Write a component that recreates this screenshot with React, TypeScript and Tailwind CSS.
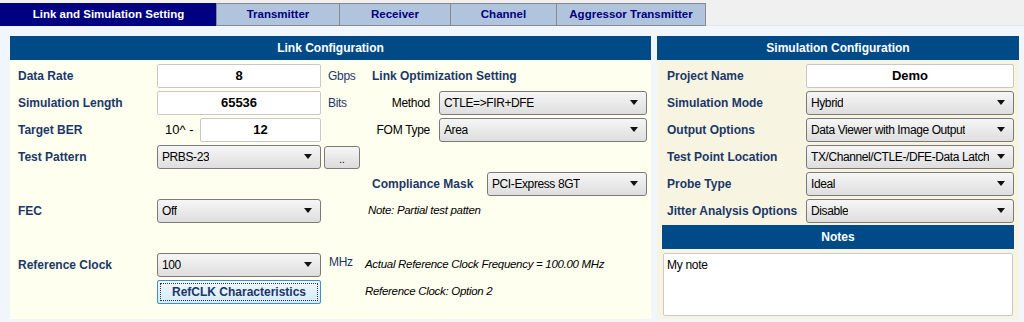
import React from "react";

const tabs = [
  { label: "Link and Simulation Setting", w: "w-[217px]", active: true },
  { label: "Transmitter", w: "w-[124px]" },
  { label: "Receiver", w: "w-[112px]" },
  { label: "Channel", w: "w-[107px]" },
  { label: "Aggressor Transmitter", w: "w-[150px]" },
];

function Arrow() {
  return (
    <svg width="8" height="5" viewBox="0 0 8 5" className="shrink-0">
      <polygon points="0,0 8,0 4,5" fill="#111" />
    </svg>
  );
}

function Select({ value, w }: { value: string; w: string }) {
  return (
    <div
      className={`${w} h-[24px] flex items-center justify-between pl-[4px] pr-[8px] border border-[#7a7a7a] rounded-[3px] bg-gradient-to-b from-[#f6f6f6] to-[#dedede] text-[12px] tracking-[-0.4px] text-black`}
    >
      <span className="whitespace-nowrap overflow-hidden">{value}</span>
      <Arrow />
    </div>
  );
}

function Input({ value, w }: { value: string; w: string }) {
  return (
    <div
      className={`${w} h-[24px] flex items-center justify-center border border-[#c9c9c9] rounded-[2px] bg-white text-[13px] font-bold text-black`}
    >
      {value}
    </div>
  );
}

function Label({ children }: { children: React.ReactNode }) {
  return (
    <div className="w-[139px] shrink-0 whitespace-nowrap text-[12px] font-bold text-[#1b3768]">{children}</div>
  );
}

function Header({ title }: { title: string }) {
  return (
    <div className="h-[24px] flex items-center justify-center bg-[#004b87] text-white text-[12px] font-bold">
      {title}
    </div>
  );
}

function Unit({ children }: { children: React.ReactNode }) {
  return <span className="ml-[7px] text-[12px] tracking-[-0.3px] text-[#1b3768]">{children}</span>;
}

export default function App() {
  return (
    <div className="w-[1024px] h-[322px] overflow-hidden bg-[#f0f6fc] font-['Liberation_Sans',Arial,sans-serif]">
      {/* tab strip */}
      <div className="h-[26px] bg-[#f0f0f0] flex items-start pt-[3px] border-b border-[#e4e8ec]">
        {tabs.map((t) =>
          t.active ? (
            <div
              key={t.label}
              className={`${t.w} h-[23px] flex items-center justify-center bg-[#000080] text-white text-[11.5px] font-bold`}
            >
              {t.label}
            </div>
          ) : (
            <div
              key={t.label}
              className={`${t.w} -ml-px h-[23px] flex items-center justify-center bg-[#b0c4de] border border-[#8a8a8a] text-[#000080] text-[11.5px] font-bold`}
            >
              {t.label}
            </div>
          )
        )}
      </div>

      <div className="flex gap-[6px] pl-[10px] pt-[10px]">
        {/* Link Configuration */}
        <div className="w-[641px]">
          <Header title="Link Configuration" />
          <div className="h-[259px] bg-[#ffffef] pt-[2px] flex">
            <div className="w-[355px] pl-[8px]">
              <div className="h-[27px] flex items-center">
                <Label>Data Rate</Label>
                <Input value="8" w="w-[164px]" />
                <Unit>Gbps</Unit>
              </div>
              <div className="h-[27px] flex items-center">
                <Label>Simulation Length</Label>
                <Input value="65536" w="w-[164px]" />
                <Unit>Bits</Unit>
              </div>
              <div className="h-[27px] flex items-center">
                <Label>Target BER</Label>
                <span className="w-[43px] pl-[8px] text-[13px] text-black">10^ -</span>
                <Input value="12" w="w-[121px]" />
              </div>
              <div className="h-[27px] flex items-center">
                <Label>Test Pattern</Label>
                <Select value="PRBS-23" w="w-[164px]" />
                <div className="ml-[3px] mt-[2px] w-[36px] h-[23px] flex items-end justify-center pb-[3px] border border-[#7a7a7a] rounded-[3px] bg-gradient-to-b from-[#f6f6f6] to-[#dcdcdc] text-[10px] leading-none text-black">
                  ..
                </div>
              </div>
              <div className="h-[27px]" />
              <div className="h-[27px] flex items-center">
                <Label>FEC</Label>
                <Select value="Off" w="w-[164px]" />
              </div>
              <div className="h-[27px]" />
              <div className="h-[27px] flex items-center">
                <Label>Reference Clock</Label>
                <Select value="100" w="w-[164px]" />
                <span className="ml-[8px] -mt-[6px] text-[12px] tracking-[-0.3px] text-[#1b3768]">MHz</span>
              </div>
              <div className="h-[27px] flex items-center">
                <div className="w-[139px]" />
                <div className="w-[164px] h-[24px] p-[2px] border border-[#3c8fd0] rounded-[2px] bg-gradient-to-b from-[#eef7fd] to-[#d4ebf9]">
                  <div className="h-full flex items-center justify-center border border-dotted border-[#333] text-[12px] font-bold text-[#1b3768]">
                    RefCLK Characteristics
                  </div>
                </div>
              </div>
            </div>

            <div className="flex-1">
              <div className="h-[27px] flex items-center pl-[7px] text-[12px] font-bold text-[#1b3768]">
                Link Optimization Setting
              </div>
              <div className="h-[27px] flex items-center">
                <div className="w-[65px] text-right text-[12px] tracking-[-0.3px] text-black">Method</div>
                <div className="ml-[9px]">
                  <Select value="CTLE=>FIR+DFE" w="w-[208px]" />
                </div>
              </div>
              <div className="h-[27px] flex items-center">
                <div className="w-[65px] text-right text-[12px] tracking-[-0.3px] text-black">FOM Type</div>
                <div className="ml-[9px]">
                  <Select value="Area" w="w-[208px]" />
                </div>
              </div>
              <div className="h-[27px]" />
              <div className="h-[27px] flex items-center pl-[7px]">
                <div className="w-[115px] text-[12px] font-bold text-[#1b3768]">Compliance Mask</div>
                <Select value="PCI-Express 8GT" w="w-[160px]" />
              </div>
              <div className="h-[27px] flex items-center pl-[3px] text-[11.5px] tracking-[-0.3px] italic text-black">
                Note: Partial test patten
              </div>
              <div className="h-[27px]" />
              <div className="h-[27px] flex items-center text-[11.5px] tracking-[-0.3px] italic text-black">
                Actual Reference Clock Frequency = 100.00 MHz
              </div>
              <div className="h-[27px] flex items-center text-[11.5px] tracking-[-0.3px] italic text-black">
                Reference Clock: Option 2
              </div>
            </div>
          </div>
        </div>

        {/* Simulation Configuration */}
        <div className="w-[362px]">
          <Header title="Simulation Configuration" />
          <div className="h-[259px] bg-[#f7f5e1] pt-[2px]">
            <div className="pl-[10px]">
              <div className="h-[27px] flex items-center">
                <Label>Project Name</Label>
                <Input value="Demo" w="w-[208px]" />
              </div>
              <div className="h-[27px] flex items-center">
                <Label>Simulation Mode</Label>
                <Select value="Hybrid" w="w-[208px]" />
              </div>
              <div className="h-[27px] flex items-center">
                <Label>Output Options</Label>
                <Select value="Data Viewer with Image Output" w="w-[208px]" />
              </div>
              <div className="h-[27px] flex items-center">
                <Label>Test Point Location</Label>
                <Select value="TX/Channel/CTLE-/DFE-Data Latch" w="w-[208px]" />
              </div>
              <div className="h-[27px] flex items-center">
                <Label>Probe Type</Label>
                <Select value="Ideal" w="w-[208px]" />
              </div>
              <div className="h-[27px] flex items-center">
                <Label>Jitter Analysis Options</Label>
                <Select value="Disable" w="w-[208px]" />
              </div>
            </div>
            <div className="mx-[5px] mt-[1px]">
              <Header title="Notes" />
              <div className="mt-[4px] mx-px h-[63px] bg-white border border-[#c9c9c9] rounded-[2px] px-[3px] pt-[2px] text-[12px] tracking-[-0.3px] text-black">
                My note
              </div>
            </div>
          </div>
        </div>
      </div>
    </div>
  );
}
